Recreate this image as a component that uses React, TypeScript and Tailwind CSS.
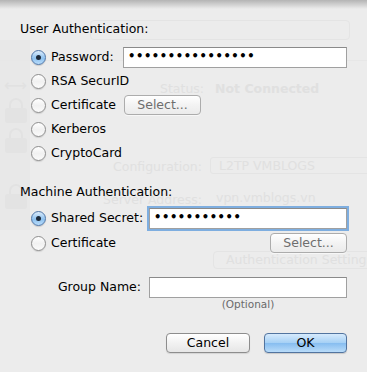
import React from "react";

const FONT = { fontFamily: '"Lucida Grande", "DejaVu Sans", sans-serif' };

function Radio({ on }: { on?: boolean }) {
  return on ? (
    <div className="w-[15px] h-[15px] rounded-full border border-[#4f76a8] bg-[linear-gradient(#dcecfb,#8dc1ef_55%,#b9dcfa)] flex items-center justify-center shrink-0 shadow-[0_1px_1px_rgba(0,0,0,0.15)]">
      <div className="w-[5px] h-[5px] rounded-full bg-[#1d2a3a]" />
    </div>
  ) : (
    <div className="w-[15px] h-[15px] rounded-full border border-[#8e8e8e] bg-[linear-gradient(#ffffff,#f1f1f1_50%,#fbfbfb)] shrink-0 shadow-[0_1px_1px_rgba(0,0,0,0.12)]" />
  );
}

function Field({ w, focus, children }: { w: string; focus?: boolean; children?: React.ReactNode }) {
  return (
    <div
      className={`${w} h-[21px] bg-white flex items-center pl-[4px] border border-[#a0a0a0] border-t-[#8a8a8a] ${
        focus ? "shadow-[0_0_0_2px_#7eaee0] border-[#6f9fd6]" : ""
      }`}
    >
      {children}
    </div>
  );
}

function Dots({ n }: { n: number }) {
  return (
    <span className="text-[11.5px] leading-none text-black tracking-[0.6px] font-bold">
      {"•".repeat(n)}
    </span>
  );
}

function SelectBtn() {
  return (
    <div className="w-[77px] h-[20px] rounded-[4px] border border-[#acacac] bg-[linear-gradient(#ffffff,#f3f3f3_50%,#ebebeb)] flex items-center justify-center text-[12.5px] text-[#6e6e6e] shadow-[0_1px_0_rgba(255,255,255,0.6)]">
      Select...
    </div>
  );
}

function GhostLock({ top }: { top: string }) {
  return (
    <div className={`absolute left-[5px] ${top} w-[22px] h-[26px] flex flex-col items-center`}>
      <div className="w-[14px] h-[10px] border-2 border-b-0 border-[#e2e2e2] rounded-t-[7px]" />
      <div className="w-[22px] h-[15px] bg-[#e3e3e3] rounded-[2px]" />
    </div>
  );
}

export default function App() {
  return (
    <div className="relative w-[367px] h-[372px] bg-[#ececec] overflow-hidden text-black" style={FONT}>
      {/* ghost background window */}
      <div className="absolute inset-0 text-[12.5px] text-[#e0e0e0] pointer-events-none whitespace-nowrap">
        <div className="absolute left-0 top-[40px] w-[30px] h-[190px] bg-[#e8e8e8]" />
        <div className="absolute left-[4px] top-[74px] text-[16px] text-[#e1e1e1]">⟷</div>
        <GhostLock top="top-[98px]" />
        <GhostLock top="top-[128px]" />
        <GhostLock top="top-[184px]" />
        <div className="absolute left-[90px] top-[20px] w-[260px] h-[20px] rounded-[4px] border border-[#e4e4e4]" />
        <div className="absolute left-0 right-0 top-[60px] h-px bg-[#e7e7e7]" />
        <div className="absolute left-[160px] top-[80px]">Status:</div>
        <div className="absolute left-[215px] top-[80px] font-bold">Not Connected</div>
        <div className="absolute left-[104px] top-[158px] w-[98px] text-right">Configuration:</div>
        <div className="absolute left-[210px] top-[157px] w-[170px] h-[17px] rounded-[3px] border border-[#e4e4e4] pl-[8px] leading-[15px]">
          L2TP VMBLOGS
        </div>
        <div className="absolute left-[90px] top-[191px] w-[112px] text-right">Server Address:</div>
        <div className="absolute left-[210px] top-[190px] w-[170px] h-[17px] pl-[6px] leading-[15px]">
          vpn.vmblogs.vn
        </div>
        <div className="absolute left-[213px] top-[251px] w-[170px] h-[18px] rounded-[4px] border border-[#e4e4e4] pl-[12px] leading-[16px]">
          Authentication Settings...
        </div>
      </div>

      {/* top sheet shadow */}
      <div className="absolute left-0 right-0 top-0 h-[9px] bg-[linear-gradient(#b4b4b4,rgba(236,236,236,0))]" />

      {/* sheet content */}
      <div className="relative flex flex-col pt-[21px] text-[12.5px]">
        <div className="h-[16px] leading-[16px] pl-[20px]">User Authentication:</div>

        <div className="flex flex-col mt-[8px] pl-[31px]">
          <div className="h-[24px] flex items-center">
            <Radio on />
            <div className="w-[77px] pl-[5px]">Password:</div>
            <Field w="w-[224px]">
              <Dots n={16} />
            </Field>
          </div>
          <div className="h-[24px] flex items-center">
            <Radio />
            <div className="pl-[5px]">RSA SecurID</div>
          </div>
          <div className="h-[24px] flex items-center">
            <Radio />
            <div className="w-[78px] pl-[5px]">Certificate</div>
            <SelectBtn />
          </div>
          <div className="h-[24px] flex items-center">
            <Radio />
            <div className="pl-[5px]">Kerberos</div>
          </div>
          <div className="h-[24px] flex items-center">
            <Radio />
            <div className="pl-[5px]">CryptoCard</div>
          </div>
        </div>

        <div className="h-[16px] leading-[16px] pl-[20px] mt-[19px]">Machine Authentication:</div>

        <div className="flex flex-col mt-[6px] pl-[31px]">
          <div className="h-[24px] flex items-center">
            <Radio on />
            <div className="w-[103px] pl-[5px]">Shared Secret:</div>
            <Field w="w-[198px]" focus>
              <Dots n={11} />
            </Field>
          </div>
          <div className="h-[24px] flex items-center mt-[1px]">
            <Radio />
            <div className="flex-1 pl-[5px]">Certificate</div>
            <div className="pr-[20px]">
              <SelectBtn />
            </div>
          </div>
        </div>

        <div className="flex items-center h-[24px] mt-[20px]">
          <div className="w-[141px] text-right">Group Name:</div>
          <div className="ml-[8px]">
            <Field w="w-[198px]" />
          </div>
        </div>
        <div className="flex">
          <div className="ml-[149px] w-[198px] text-center text-[10.5px] text-[#6a6a6a] leading-[13px] mt-[-1px]">
            (Optional)
          </div>
        </div>

        <div className="flex justify-end gap-[14px] pr-[20px] mt-[22px]">
          <div className="w-[84px] h-[20px] rounded-[4px] border border-[#8d8d8d] bg-[linear-gradient(#ffffff,#f2f2f2_50%,#e6e6e6)] flex items-center justify-center shadow-[0_1px_1px_rgba(0,0,0,0.1)]">
            Cancel
          </div>
          <div className="w-[83px] h-[20px] rounded-[4px] border border-[#52749f] bg-[linear-gradient(#d6eafc,#a5d0f5_50%,#86bdf0_51%,#b9dcf9)] flex items-center justify-center shadow-[0_1px_1px_rgba(0,0,0,0.15)]">
            OK
          </div>
        </div>
      </div>
    </div>
  );
}
